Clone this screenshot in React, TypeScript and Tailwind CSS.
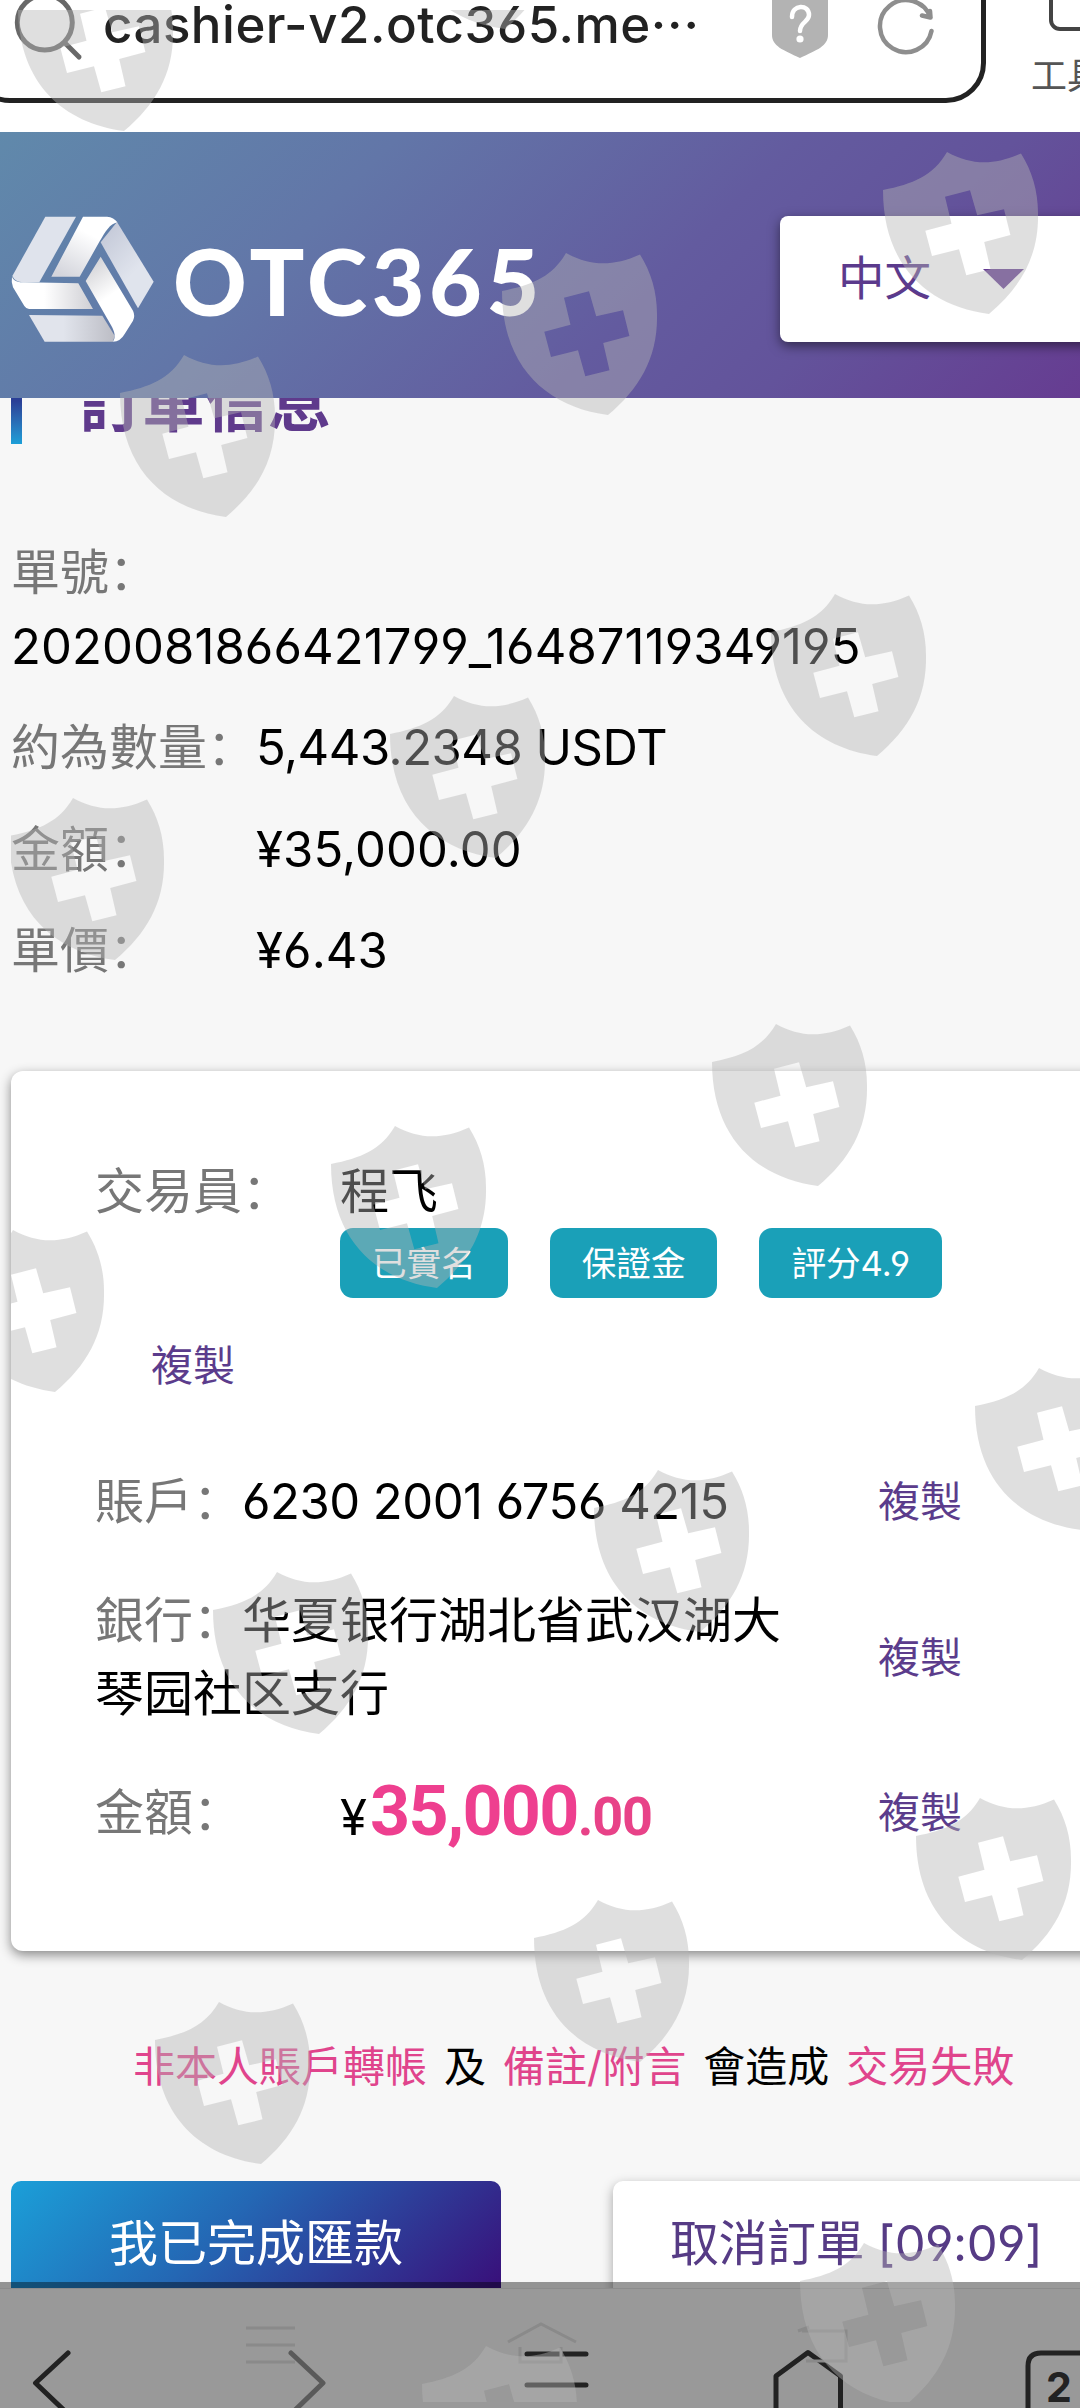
import { ReactNode } from 'react'

const shields = [
  [399, -134],
  [18, -32],
  [883, 151],
  [502, 252],
  [120, 354],
  [771, 593],
  [390, 695],
  [9, 797],
  [712, 1023],
  [331, 1125],
  [-51, 1229],
  [975, 1367],
  [594, 1469],
  [213, 1571],
  [916, 1797],
  [534, 1899],
  [155, 2001],
  [800, 2242],
  [422, 2345],
]

const orderRows = [
  { label: '約為數量：', value: '5,443.2348 USDT' },
  { label: '金額：', value: '¥35,000.00' },
  { label: '單價：', value: '¥6.43' },
]

function Watermark() {
  return (
    <div className="absolute left-[11px] right-0 top-[10px] bottom-[6px] overflow-hidden pointer-events-none">
      <svg width="1069" height="2392" viewBox="11 10 1069 2392" fill="#b4b4b4" fillOpacity="0.43">
        {shields.map(([x, y]) => (
          <path
            key={`${x}-${y}`}
            transform={`translate(${x} ${y})`}
            fillRule="evenodd"
            d="M0 39C30 33 50 25 64 1C88 14 110 15 138 2.5C149 20 155 40 155 62C156 105 138 136 106 163C45 155 0 115 0 39ZM62 45.7L87 39.3L94.2 64.3L121 58.3L127.4 84L101.2 91L107.5 118.3L83.3 124.3L76 98.3L49 105L42.3 79.7L68.5 72.7Z"
          />
        ))}
      </svg>
    </div>
  )
}

function AddressBar() {
  return (
    <div className="relative flex h-[132px] shrink-0 bg-white">
      <div className="-ml-[30px] -mt-[40px] flex h-[143px] w-[1016px] shrink-0 rounded-[40px] border-[5px] border-[#222] pl-[37px] pt-[35px]">
        <svg className="shrink-0" width="76" height="64" viewBox="12 0 76 64" fill="none" stroke="#686868" strokeWidth="5" strokeLinecap="round">
          <circle cx="44.8" cy="22.5" r="27.5" />
          <path d="M65 43L79 57" />
        </svg>
        <span className="ml-[15px] -mt-[7px] w-[669px] shrink-0 whitespace-nowrap text-[51px] leading-[64px] font-medium tracking-[0.5px] text-[#222]">
          cashier-v2.otc365.me<span className="tracking-[1px]">···</span>
        </span>
        <svg className="shrink-0" width="56" height="60" viewBox="0 0 56 60" fill="none">
          <path d="M0 -10H56V35C56 46 45 50 28 58C11 50 0 46 0 35Z" fill="#b3b3b3" />
          <path d="M20 17C20 4 37 4 37 15C37 22 28 22 28 31" stroke="#fff" strokeWidth="4.5" strokeLinecap="round" />
          <circle cx="28" cy="39" r="3.6" fill="#fff" />
        </svg>
        <svg className="ml-[48px] shrink-0" width="60" height="60" viewBox="877 0 60 60" fill="none" stroke="#8e8e8e" strokeWidth="4.5" strokeLinecap="round" strokeLinejoin="round">
          <path d="M932.5 31A26 26 0 1 1 931.5 17.5L923 15.5M931.5 17.5L931 11" />
        </svg>
      </div>
      <div className="ml-[45px] flex w-[80px] shrink-0 flex-col">
        <div className="ml-[18px] -mt-[20px] h-[51px] w-[60px] rounded-[11px] border-4 border-[#444]" />
        <span className="mt-[18px] whitespace-nowrap text-[36px] leading-[54px] text-[#555]">工具</span>
      </div>
    </div>
  )
}

function Logo() {
  return (
    <svg className="shrink-0" width="143" height="127" viewBox="34 47 429 379">
      <defs>
        <linearGradient id="top" x1="0.6" y1="0.3" x2="0.2" y2="1">
          <stop offset="0" stopColor="#fff" />
          <stop offset="1" stopColor="#d4d5dc" />
        </linearGradient>
        <linearGradient id="left">
          <stop offset="0.4" stopColor="#fff" />
          <stop offset="1" stopColor="#cfcfd4" />
        </linearGradient>
        <linearGradient id="bottom">
          <stop offset="0.4" stopColor="#e1e4ec" />
          <stop offset="1" stopColor="#bcbdc5" />
        </linearGradient>
        <linearGradient id="right" x1="0.2" y1="0" x2="0.6" y2="1">
          <stop offset="0" stopColor="#d0d0d4" />
          <stop offset="0.5" stopColor="#fff" />
        </linearGradient>
        <linearGradient id="side" x1="0.2" y1="0" x2="0.6" y2="0.6">
          <stop offset="0" stopColor="#c4c9d8" />
          <stop offset="1" stopColor="#e0e4ed" />
        </linearGradient>
      </defs>
      <path d="M137 48H229L119 245H70Q45 243 38 226Z" fill="#dfe3ec" />
      <path d="M37 228C42 241 55 245 75 245L236 248L280 325H88Q80 325 74 316L40 260Q34 245 37 228Z" fill="url(#left)" />
      <path d="M88 343L308 345L345 405L340 423H135Z" fill="url(#bottom)" />
      <path d="M303 125L352 64L462 243L415 323Z" fill="url(#side)" />
      <path d="M250 48H322Q343 50 353 65C330 70 318 92 300 122L240 228H155Z" fill="url(#top)" />
      <path d="M303 168L400 330Q407 345 400 360L375 400Q362 423 340 423C350 408 344 392 335 375L258 241Z" fill="url(#right)" />
    </svg>
  )
}

function Header() {
  return (
    <header className="relative z-10 flex h-[266px] shrink-0 items-center bg-[linear-gradient(135deg,#6089ab_0%,#6276a8_30%,#635b9f_60%,#63539b_76%,#663c91_100%)] pl-[11px] pt-[28px]">
      <Logo />
      <span className="ml-[19px] w-[607px] shrink-0 pt-1 font-['Lato'] text-[91px] leading-[100px] font-black tracking-[4.6px] text-white">OTC365</span>
      <button className="flex h-[126px] w-[340px] shrink-0 items-center rounded-lg bg-white pl-[58px] text-[46.5px] text-[#5b3a8c] shadow-[0_4px_12px_rgba(0,0,0,0.5)]">
        中文
        <svg className="ml-[52px]" width="41" height="20" viewBox="0 0 41 20" fill="#653c92">
          <path d="M0 0H41L20.5 20Z" />
        </svg>
      </button>
    </header>
  )
}

function CopyLink() {
  return <a className="text-[42px] leading-[63px] text-[#5b3c8c]">複製</a>
}

function Badge({ children }: { children: ReactNode }) {
  return (
    <span className="flex h-[70px] items-center rounded-[13px] bg-[#1aa0b8] px-[32px] text-[34.6px] leading-[52px] text-white">
      {children}
    </span>
  )
}

function OrderInfo() {
  return (
    <section className="pl-[11px]">
      <div className="-mt-[40px] flex h-[86px] items-center">
        <div className="h-full w-[11px] bg-linear-to-b from-[#2a3f96] from-50% to-[#1b9fd8]" />
        <h2 className="ml-[57px] pt-1 text-[63px] leading-[80px] font-bold text-[#5f3a8c]">訂單信息</h2>
      </div>
      <div className="mt-[92px] leading-[73.5px]">
        <div className="text-[#777]">單號：</div>
        <div className="tracking-[0.1px]">2020081866421799_16487119349195</div>
      </div>
      {orderRows.map((row) => (
        <div key={row.label} className="mt-[28px] flex leading-[73.5px]">
          <span className="w-[245px] text-[#777]">{row.label}</span>
          <span className={row.value.endsWith('USDT') ? 'tracking-[-0.5px]' : 'tracking-[0.1px]'}>{row.value}</span>
        </div>
      ))}
    </section>
  )
}

function TraderCard() {
  return (
    <section className="ml-[11px] mt-[83px] h-[880px] w-[1100px] rounded-xl bg-white pl-[84px] pt-[84px] leading-[73.5px] shadow-[0_4px_12px_rgba(0,0,0,0.45)]">
      <div className="flex">
        <span className="w-[245px] text-[#777]">交易員：</span>
        <div>
          <div>程飞</div>
          <div className="flex gap-[42px]">
            <Badge>已實名</Badge>
            <Badge>保證金</Badge>
            <Badge>評分4.9</Badge>
          </div>
        </div>
      </div>
      <div className="mt-[36px] flex pl-[56px]">
        <CopyLink />
      </div>
      <div className="mt-[68px] flex items-center">
        <p className="w-[783px] tracking-[-0.5px]">
          <span className="tracking-normal text-[#777]">賬戶：</span>6230 2001 6756 4215
        </p>
        <CopyLink />
      </div>
      <div className="mt-[45px] flex items-center">
        <p className="w-[783px] pr-[80px]">
          <span className="text-[#777]">銀行：</span>华夏银行湖北省武汉湖大琴园社区支行
        </p>
        <CopyLink />
      </div>
      <div className="mt-[45px] flex h-[74px] items-center">
        <span className="w-[245px] text-[#777]">金額：</span>
        <span className="w-[538px] pt-1">
          ¥<span className="ml-[3px] font-['Roboto'] text-[70px] font-bold tracking-[-1.7px] text-[#ee3f8f]">35,000</span>
          <span className="font-['Roboto'] text-[54px] font-bold tracking-[-1.2px] text-[#e84288]">.00</span>
        </span>
        <CopyLink />
      </div>
    </section>
  )
}

function Actions() {
  return (
    <>
      <p className="mt-[84px] flex gap-[17px] pl-[133px] text-[42px] leading-[63px] whitespace-nowrap">
        <span className="text-[#e0448c]">非本人賬戶轉帳</span>
        <span>及</span>
        <span className="text-[#e0448c]">備註/附言</span>
        <span>會造成</span>
        <span className="text-[#e0448c]">交易失敗</span>
      </p>
      <div className="mt-[83px] flex gap-[112px] pl-[11px]">
        <button className="h-[126px] w-[490px] shrink-0 rounded-[10px] bg-[linear-gradient(135deg,#1b9fd8_0%,#2467b4_42%,#38127c_95%)] text-white">
          我已完成匯款
        </button>
        <button className="h-[126px] w-[490px] shrink-0 rounded-[10px] bg-white pl-[57px] text-left tracking-[-0.5px] text-[#563b85] shadow-[0_4px_12px_rgba(0,0,0,0.35)]">
          取消訂單 [09:09]
        </button>
      </div>
    </>
  )
}

function BottomNav() {
  return (
    <nav className="relative z-10 flex h-[120px] shrink-0 border-t border-[#8c8c8c] bg-[#999]">
      <div className="absolute inset-x-0 -top-[7px] h-[6px] bg-black/40" />
      {/* faint previous toolbar still fading out behind the current one */}
      <svg className="absolute left-0 top-0" width="1080" height="119" viewBox="0 2289 1080 119" fill="none" stroke="#8a8a8a" strokeWidth="3">
        <path d="M246 2328H295M246 2345H295M246 2362H295" />
        <path d="M508 2342L541 2324L576 2342M520 2347V2362H561V2347" />
        <path d="M802 2331H846V2361H806M798 2331L809 2327" />
      </svg>
      <svg width="1080" height="119" viewBox="0 2289 1080 119" fill="none" stroke="#222" strokeWidth="5" strokeLinecap="round" strokeLinejoin="round">
        <path d="M68 2353L35.5 2383L68 2414" />
        <path d="M291 2353L323 2383L291 2414" stroke="#5a5a5a" />
        <path d="M527 2354H586M527 2385H586" />
        <path d="M776 2412V2376L808 2352.5L840.5 2376V2412" />
        <path d="M1028 2412V2366Q1028 2353 1041 2353H1085" />
      </svg>
      <span className="absolute left-[1046px] top-[73px] text-[41px] leading-[50px] font-bold text-[#222]">2</span>
    </nav>
  )
}

export default function App() {
  return (
    <div
      lang="zh-CN"
      className="relative flex h-[2408px] w-[1080px] flex-col overflow-hidden bg-[#f7f7f7] font-['Inter','Noto_Sans_CJK_SC',sans-serif] text-[49px] text-black [font-feature-settings:'cv03','cv04']"
    >
      <AddressBar />
      <Header />
      <main className="h-[1890px] shrink-0 overflow-hidden">
        <OrderInfo />
        <TraderCard />
        <Actions />
      </main>
      <BottomNav />
      <div className="absolute inset-0 z-20">
        <Watermark />
      </div>
    </div>
  )
}
